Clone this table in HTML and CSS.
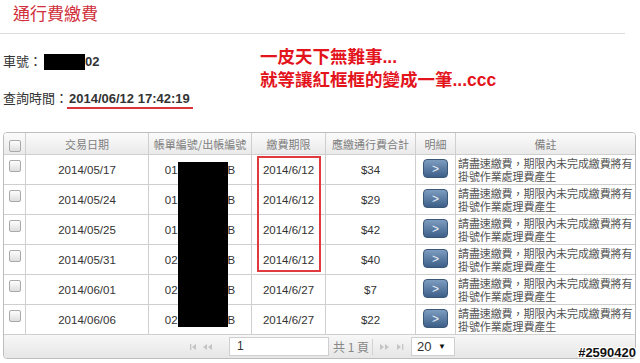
FILE: index.html
```html
<!DOCTYPE html>
<html lang="zh-Hant">
<head>
<meta charset="utf-8">
<title>通行費繳費</title>
<link rel="stylesheet" href="styles.css">
</head>
<body>
<div class="page">
  <h1 class="title">通行費繳費</h1>
  <div class="info">
    <div class="fields">
      <div class="field">車號：<span class="plate"></span><b>02</b></div>
      <div class="field">查詢時間：<b class="stamp">2014/06/12 17:42:19</b></div>
    </div>
    <div class="remark">一皮天下無難事...<br>就等讓紅框框的變成一筆...ccc</div>
  </div>

  <div class="grid-wrap">
    <table class="grid">
      <colgroup>
        <col class="c-chk"><col class="c-date"><col class="c-bill"><col class="c-due"><col class="c-amt"><col class="c-det"><col class="c-note">
      </colgroup>
      <thead>
        <tr>
          <th><span class="chk"></span></th>
          <th>交易日期</th>
          <th>帳單編號/出帳編號</th>
          <th>繳費期限</th>
          <th>應繳通行費合計</th>
          <th>明細</th>
          <th class="last">備註</th>
        </tr>
      </thead>
      <tbody>
        <tr>
          <td><span class="chk"></span></td><td>2014/05/17</td><td class="bill">01<span class="gap"></span>B</td><td>2014/6/12</td><td>$34</td><td><span class="btn">&gt;</span></td><td class="note last">請盡速繳費，期限內未完成繳費將有掛號作業處理費產生</td>
        </tr>
        <tr>
          <td><span class="chk"></span></td><td>2014/05/24</td><td class="bill">01<span class="gap"></span>B</td><td>2014/6/12</td><td>$29</td><td><span class="btn">&gt;</span></td><td class="note last">請盡速繳費，期限內未完成繳費將有掛號作業處理費產生</td>
        </tr>
        <tr>
          <td><span class="chk"></span></td><td>2014/05/25</td><td class="bill">01<span class="gap"></span>B</td><td>2014/6/12</td><td>$42</td><td><span class="btn">&gt;</span></td><td class="note last">請盡速繳費，期限內未完成繳費將有掛號作業處理費產生</td>
        </tr>
        <tr>
          <td><span class="chk"></span></td><td>2014/05/31</td><td class="bill">02<span class="gap"></span>B</td><td>2014/6/12</td><td>$40</td><td><span class="btn">&gt;</span></td><td class="note last">請盡速繳費，期限內未完成繳費將有掛號作業處理費產生</td>
        </tr>
        <tr>
          <td><span class="chk"></span></td><td>2014/06/01</td><td class="bill">02<span class="gap"></span>B</td><td>2014/6/27</td><td>$7</td><td><span class="btn">&gt;</span></td><td class="note last">請盡速繳費，期限內未完成繳費將有掛號作業處理費產生</td>
        </tr>
        <tr>
          <td><span class="chk"></span></td><td>2014/06/06</td><td class="bill">02<span class="gap"></span>B</td><td>2014/6/27</td><td>$22</td><td><span class="btn">&gt;</span></td><td class="note last">請盡速繳費，期限內未完成繳費將有掛號作業處理費產生</td>
        </tr>
      </tbody>
      <tfoot>
        <tr>
          <td colspan="7" class="pager-cell">
            <div class="pager">
              <svg class="nav" width="26" height="8" viewBox="0 0 26 8"><rect x="0" y="1" width="1.3" height="6" fill="#c4c4c4"/><path d="M6 1 L2 4 L6 7Z" fill="#c4c4c4"/><path d="M17 1 L13 4 L17 7Z M22 1 L18 4 L22 7Z" fill="#c4c4c4"/></svg>
              <span class="page-input">1</span>
              <span class="total">共 1 頁</span>
              <svg class="nav" width="26" height="8" viewBox="0 0 26 8"><path d="M1 1 L5 4 L1 7Z M6 1 L10 4 L6 7Z" fill="#c4c4c4"/><path d="M18 1 L22 4 L18 7Z" fill="#c4c4c4"/><rect x="23" y="1" width="1.3" height="6" fill="#c4c4c4"/></svg>
              <span class="size">20 <span class="caret">▼</span></span>
            </div>
          </td>
        </tr>
      </tfoot>
    </table>
    <div class="mask"></div>
    <div class="highlight"></div>
  </div>
  <div class="watermark">#2590420</div>
</div>
</body>
</html>
```

FILE: styles.css
```css
html, body {
  margin: 0;
  padding: 0;
  background: #fff;
}

.page {
  position: relative;
  width: 640px;
  height: 363px;
  overflow: hidden;
  font-family: "Liberation Sans", "Noto Sans CJK TC", sans-serif;
  color: #333;
}

.title {
  margin: 0;
  width: 625px;
  height: 34px;
  padding: 3px 0 0 13px;
  box-sizing: border-box;
  border-bottom: 1px solid #dcdcdc;
  font-family: "Noto Sans CJK TC", sans-serif;
  font-size: 17px;
  line-height: 20px;
  font-weight: 400;
  color: #cf2e3a;
}

.info {
  display: flex;
}

.fields {
  width: 257px;
  padding: 18px 0 0 3px;
  display: flex;
  flex-direction: column;
  gap: 17px;
}

.field {
  height: 20px;
  line-height: 20px;
  font-size: 13px;
  font-family: "Liberation Sans", "Noto Sans CJK TC", sans-serif;
  color: #333;
  display: flex;
  align-items: center;
}

.field b {
  font-weight: 700;
  color: #333;
}

.plate {
  display: inline-block;
  width: 41px;
  height: 16px;
  background: #000;
  margin-left: 2px;
}

.stamp {
  margin-left: -1px;
  padding: 0 3px 0 2px;
  line-height: 17px;
  border-bottom: 2px solid #d8333a;
}

.remark {
  padding-top: 12px;
  font-size: 17.5px;
  line-height: 23px;
  font-weight: 700;
  color: #e3141c;
  font-family: "Liberation Sans", "Noto Sans CJK TC", sans-serif;
}

.grid-wrap {
  position: relative;
  margin: 23px 0 0 3px;
  width: 633px;
  border: 1px solid #bdbdbd;
  border-radius: 4px;
  box-sizing: border-box;
  overflow: hidden;
}

.grid {
  width: 631px;
  table-layout: fixed;
  border-collapse: separate;
  border-spacing: 0;
  font-size: 11.5px;
}

.c-chk { width: 22px; }
.c-date { width: 123px; }
.c-bill { width: 103px; }
.c-due { width: 74px; }
.c-amt { width: 90px; }
.c-det { width: 40px; }
.c-note { width: 179px; }

.grid th, .grid td {
  box-sizing: border-box;
  padding: 0;
  border-right: 1px solid #cfcfcf;
  border-bottom: 1px solid #cfcfcf;
  text-align: center;
  vertical-align: middle;
  overflow: hidden;
  white-space: nowrap;
}

.grid .last {
  border-right: none;
}

.grid th {
  height: 22px;
  background: linear-gradient(#fbfbfb, #eaeaea);
  font-weight: 400;
  font-size: 11px;
  color: #808080;
  font-family: "Noto Sans CJK TC", sans-serif;
}

.grid tbody td {
  height: 30px;
  color: #333;
}

.gap {
  display: inline-block;
  width: 50px;
}

.chk {
  display: inline-block;
  width: 10px;
  height: 10px;
  border: 1px solid #a9a9a9;
  border-radius: 2px;
  background: linear-gradient(#fdfdfd, #dedede);
  vertical-align: middle;
  position: relative;
  top: -4px;
}

.grid th .chk {
  top: 0;
}

.btn {
  display: inline-block;
  width: 25px;
  height: 19px;
  line-height: 18px;
  border-radius: 4px;
  background: linear-gradient(#7d9cc0, #3d5f88);
  border: 1px solid #3a5778;
  box-sizing: border-box;
  color: #e8eef6;
  font-size: 12px;
  position: relative;
  top: -1px;
}

.grid td.note {
  white-space: normal;
  text-align: left;
  padding: 1px 0 0 2px;
  font-family: "Noto Sans CJK TC", sans-serif;
  font-size: 11px;
  line-height: 13px;
  color: #555;
  letter-spacing: -0.1px;
}

.grid tfoot td {
  height: 23px;
  border-bottom: none;
  border-right: none;
  background: linear-gradient(#f7f7f7, #e6e6e6);
}

.pager {
  display: flex;
  align-items: center;
  justify-content: center;
  padding-left: 6px;
  color: #777;
  font-size: 12px;
}

.nav {
  display: block;
}

.pager .nav:first-child {
  margin-right: 13px;
}

.page-input {
  width: 100px;
  height: 19px;
  box-sizing: border-box;
  border: 1px solid #cfcfcf;
  background: #fff;
  color: #333;
  font-size: 12px;
  line-height: 17px;
  padding-left: 7px;
  text-align: left;
}

.total {
  padding: 0 3px 0 4px;
  border-right: 1px solid #d2d2d2;
  margin-right: 6px;
  line-height: 16px;
  font-family: "Noto Sans CJK TC", sans-serif;
  color: #888;
}

.pager .nav:nth-of-type(2) {
  margin-right: 6px;
}

.size {
  width: 44px;
  height: 19px;
  box-sizing: border-box;
  border: 1px solid #cfcfcf;
  background: #fff;
  color: #333;
  font-size: 13px;
  line-height: 17px;
  padding-left: 5px;
  text-align: left;
}

.caret {
  font-size: 8px;
  margin-left: 3px;
  vertical-align: 2px;
  color: #111;
}

.mask {
  position: absolute;
  left: 174px;
  top: 29px;
  width: 50px;
  height: 165px;
  background: #000;
}

.highlight {
  position: absolute;
  left: 253px;
  top: 23px;
  width: 64px;
  height: 116px;
  border: 2px solid #e03a3e;
  box-sizing: border-box;
}

.watermark {
  position: absolute;
  right: 4px;
  top: 345px;
  font-family: "Liberation Sans", sans-serif;
  font-weight: 700;
  font-size: 13px;
  line-height: 15px;
  color: #111;
  text-shadow: 1px 0 0 #fff, -1px 0 0 #fff, 0 1px 0 #fff, 0 -1px 0 #fff, 1px 1px 0 #fff, -1px -1px 0 #fff, 1px -1px 0 #fff, -1px 1px 0 #fff;
}
```
